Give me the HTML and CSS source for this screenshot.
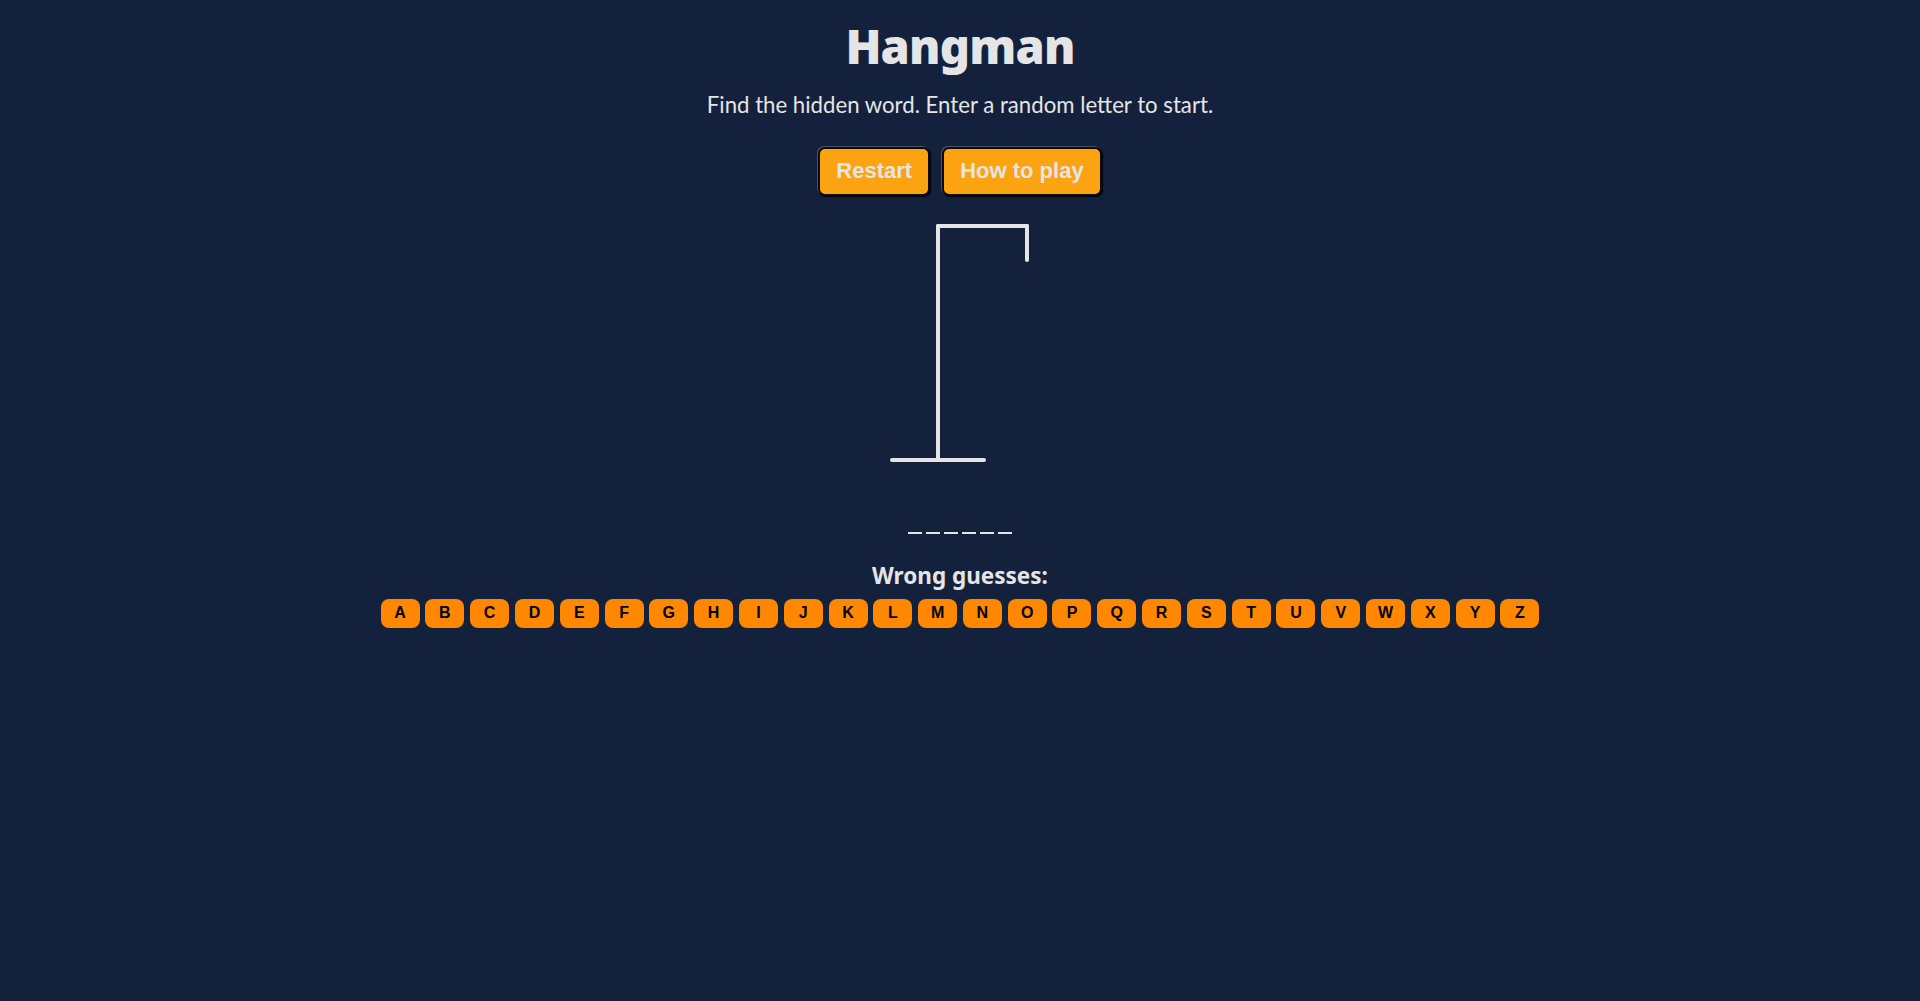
FILE: index.html
```html
<!DOCTYPE html>
<html lang="en">
<head>
<meta charset="utf-8">
<title>Hangman</title>
<link rel="stylesheet" href="styles.css">
</head>
<body>
<main class="app">
  <h1 class="title">Hangman</h1>
  <p class="subtitle">Find the hidden word. Enter a random letter to start.</p>
  <div class="actions">
    <button class="btn">Restart</button>
    <button class="btn">How to play</button>
  </div>
  <svg class="gallows" width="200" height="260" viewBox="0 0 200 260">
    <g stroke="#e5e5e5" stroke-width="4" stroke-linecap="round" fill="none">
      <line x1="32" y1="244" x2="124" y2="244"/>
      <line x1="78" y1="244" x2="78" y2="10"/>
      <line x1="78" y1="10" x2="167" y2="10"/>
      <line x1="167" y1="10" x2="167" y2="44"/>
    </g>
  </svg>
  <div class="word">
    <span class="slot"></span><span class="slot"></span><span class="slot"></span><span class="slot"></span><span class="slot"></span><span class="slot"></span>
  </div>
  <h2 class="wrong">Wrong guesses:</h2>
  <div class="keys">
    <button class="key">A</button><button class="key">B</button><button class="key">C</button><button class="key">D</button><button class="key">E</button><button class="key">F</button><button class="key">G</button><button class="key">H</button><button class="key">I</button><button class="key">J</button><button class="key">K</button><button class="key">L</button><button class="key">M</button><button class="key">N</button><button class="key">O</button><button class="key">P</button><button class="key">Q</button><button class="key">R</button><button class="key">S</button><button class="key">T</button><button class="key">U</button><button class="key">V</button><button class="key">W</button><button class="key">X</button><button class="key">Y</button><button class="key">Z</button>
  </div>
</main>
</body>
</html>
```
FILE: styles.css
```css
html, body {
  margin: 0;
  padding: 0;
  background: #14213d;
  min-height: 100%;
}
body {
  color: #e5e5e5;
  font-family: "Noto Sans", "Open Sans", sans-serif;
}
.app {
  display: flex;
  flex-direction: column;
  align-items: center;
  padding-top: 16px;
}
.title {
  margin: 0;
  font-size: 47px;
  line-height: 60px;
  font-weight: 900;
  letter-spacing: -0.8px;
}
.subtitle {
  margin: 14.5px 0 0;
  font-family: "Lato", "Noto Sans", sans-serif;
  font-size: 22.2px;
  line-height: 28px;
}
.actions {
  display: flex;
  gap: 12px;
  margin-top: 28px;
}
.btn {
  height: 49px;
  padding: 0 16px;
  background: #fca311;
  color: #e5e5e5;
  font-family: "Liberation Sans", Arial, sans-serif;
  font-weight: 700;
  font-size: 22px;
  border: 2px solid #0b0b0b;
  border-radius: 7px;
  box-shadow: -1px -1px 0 #4a5160, 1px 1px 1px #000;
}
.gallows {
  display: block;
  margin-top: 20px;
}
.word {
  display: flex;
  gap: 4px;
  margin-top: 56px;
  height: 2px;
}
.slot {
  display: block;
  width: 14px;
  height: 2px;
  background: #e5e5e5;
}
.wrong {
  margin: 28px 0 0;
  font-size: 22.5px;
  line-height: 28px;
  font-weight: 700;
}
.keys {
  display: flex;
  gap: 5.8px;
  margin-top: 9px;
}
.key {
  width: 39px;
  height: 29px;
  padding: 0;
  border: none;
  border-radius: 8px;
  background: #ff8800;
  color: #000;
  font-family: "Liberation Sans", Arial, sans-serif;
  font-weight: 700;
  font-size: 16px;
}
```
